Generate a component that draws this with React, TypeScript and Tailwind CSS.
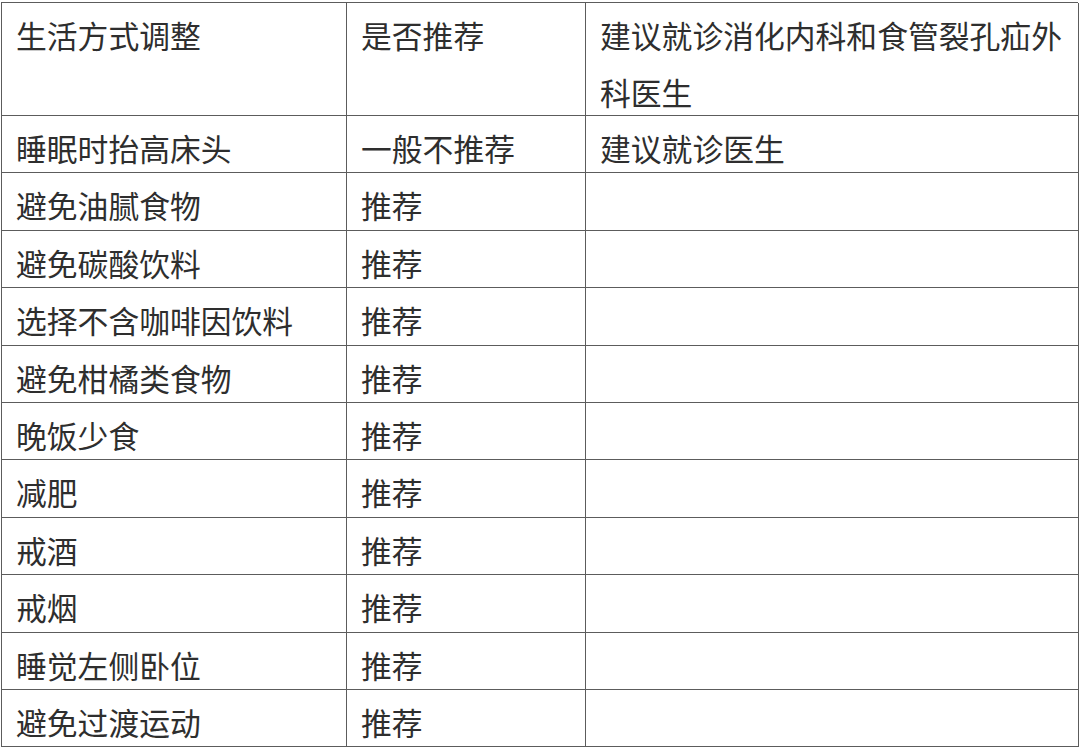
import React from 'react';

const rows: [string, string, string][] = [
  ['睡眠时抬高床头', '一般不推荐', '建议就诊医生'],
  ['避免油腻食物', '推荐', ''],
  ['避免碳酸饮料', '推荐', ''],
  ['选择不含咖啡因饮料', '推荐', ''],
  ['避免柑橘类食物', '推荐', ''],
  ['晚饭少食', '推荐', ''],
  ['减肥', '推荐', ''],
  ['戒酒', '推荐', ''],
  ['戒烟', '推荐', ''],
  ['睡觉左侧卧位', '推荐', ''],
  ['避免过渡运动', '推荐', ''],
];

function Cell({ children, tall, last }: { children?: React.ReactNode; tall?: boolean; last?: boolean }) {
  return (
    <div
      className={`${tall ? 'h-[113px]' : 'h-[57.4px]'} ${last ? '' : 'border-r'} border-b border-[#5c5c5c] pl-[14px] pr-[6px] pt-[4px] text-[30.8px] leading-[56.5px] text-[#2e2e2e]`}
    >
      {children}
    </div>
  );
}

export default function App() {
  return (
    <div
      className="h-[752px] w-[1080px] overflow-hidden bg-white pl-[1px] pt-[2px]"
      style={{ fontFamily: '"Noto Sans CJK SC", "Noto Sans", sans-serif' }}
    >
      <div className="grid w-[1077px] grid-cols-[345px_239px_493px] border-l border-t border-[#5c5c5c]">
        <Cell tall>生活方式调整</Cell>
        <Cell tall>是否推荐</Cell>
        <Cell tall>建议就诊消化内科和食管裂孔疝外科医生</Cell>
        {rows.map((row, i) => (
          <React.Fragment key={i}>
            <Cell>{row[0]}</Cell>
            <Cell>{row[1]}</Cell>
            <Cell>{row[2]}</Cell>
          </React.Fragment>
        ))}
      </div>
    </div>
  );
}
